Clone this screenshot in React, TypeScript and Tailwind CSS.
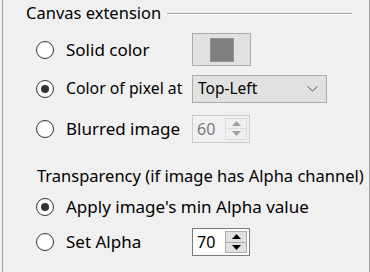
import React from 'react'

const font = { fontFamily: '"Noto Sans", "Open Sans", sans-serif' }

function Radio({ checked }: { checked?: boolean }) {
  return (
    <span className="flex h-[18px] w-[18px] shrink-0 items-center justify-center rounded-full border border-[#333] bg-white">
      {checked && <span className="h-[8px] w-[8px] rounded-full bg-[#333]" />}
    </span>
  )
}

function Arrow({ up, color }: { up?: boolean; color: string }) {
  return (
    <svg width="9" height="5" viewBox="0 0 9 5">
      <polygon points={up ? '0,5 9,5 4.5,0' : '0,0 9,0 4.5,5'} fill={color} />
    </svg>
  )
}

function Spinner({ value, disabled }: { value: string; disabled?: boolean }) {
  return (
    <div
      className={`flex h-[28px] w-[58px] items-center border ${
        disabled ? 'border-[#cccccc] bg-[#f0f0f0] text-[#7a7a7a]' : 'border-[#7a7a7a] bg-white text-black'
      }`}
    >
      <span className="flex-1 pl-[4px] text-[16px] leading-none">{value}</span>
      <div className="mr-[2px] flex h-[22px] w-[22px] flex-col">
        <div
          className={`flex flex-1 items-center justify-center border ${
            disabled ? 'border-[#dddddd] bg-[#f0f0f0]' : 'border-[#adadad] bg-[#e1e1e1]'
          }`}
        >
          <Arrow up color={disabled ? '#a0a0a0' : '#000'} />
        </div>
        <div
          className={`flex flex-1 items-center justify-center border border-t-0 ${
            disabled ? 'border-[#dddddd] bg-[#f0f0f0]' : 'border-[#adadad] bg-[#e1e1e1]'
          }`}
        >
          <Arrow color={disabled ? '#a0a0a0' : '#000'} />
        </div>
      </div>
    </div>
  )
}

function Option({ checked, label, size = 'text-[17px]' }: { checked?: boolean; label: string; size?: string }) {
  return (
    <div className="flex w-[156px] items-center">
      <Radio checked={checked} />
      <span className={`ml-[12px] whitespace-nowrap ${size}`}>{label}</span>
    </div>
  )
}

export default function App() {
  return (
    <div className="h-[272px] w-[370px] bg-[#f0f0f0] text-black" style={font}>
      <div className="ml-[2px] h-[272px] w-[368px] border-x border-[#a0a0a0]">
        {/* group title */}
        <div className="flex h-[27px] items-center pl-[23px] pr-[17px]">
          <span className="text-[16.5px]">Canvas extension</span>
          <div className="ml-[6px] flex-1 border-t border-b border-t-[#a0a0a0] border-b-white" />
        </div>

        <div className="flex flex-col pl-[33px]">
          {/* solid color */}
          <div className="mt-[6px] flex h-[33px] items-center">
            <Option label="Solid color" />
            <div className="flex h-[33px] w-[59px] items-center justify-center border border-[#adadad] bg-[#e1e1e1]">
              <div className="h-[24px] w-[24px] border border-[#939393] bg-[#7f7f7f]" />
            </div>
          </div>

          {/* color of pixel */}
          <div className="mt-[9px] flex h-[28px] items-center">
            <Option checked label="Color of pixel at" size="text-[15.8px]" />
            <div className="flex h-[28px] w-[135px] items-center justify-between border border-[#adadad] bg-[#e1e1e1] pl-[5px] pr-[8px]">
              <span className="text-[15.5px]">Top-Left</span>
              <svg width="11" height="6" viewBox="0 0 11 6">
                <polyline points="0.5,0.5 5.5,5 10.5,0.5" fill="none" stroke="#555" strokeWidth="1" />
              </svg>
            </div>
          </div>

          {/* blurred */}
          <div className="mt-[11px] flex h-[29px] items-center">
            <Option label="Blurred image" />
            <Spinner value="60" disabled />
          </div>

          <div className="mt-[22px] ml-[1px] h-[22px] whitespace-nowrap text-[16.5px] leading-[22px]">
            Transparency (if image has Alpha channel)
          </div>

          <div className="mt-[8px] flex h-[24px] items-center">
            <Radio checked />
            <span className="ml-[12px] whitespace-nowrap text-[17px]">Apply image's min Alpha value</span>
          </div>

          <div className="mt-[9px] flex h-[28px] items-center">
            <Option label="Set Alpha" />
            <Spinner value="70" />
          </div>
        </div>
      </div>
    </div>
  )
}
